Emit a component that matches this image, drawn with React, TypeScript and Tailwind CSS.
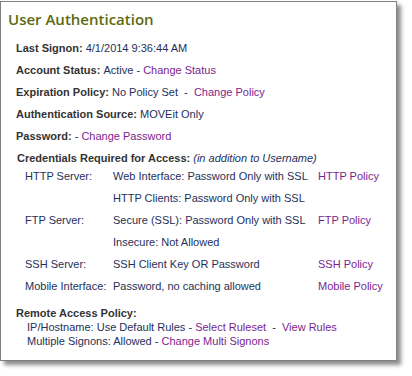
const label = "font-bold text-[#333333]";
const val = "text-[#25305a]";
const link = "text-[#7b1e8e]";

function Row({ children }: { children: React.ReactNode }) {
  return <div className="flex h-[22px] items-center whitespace-pre">{children}</div>;
}

const creds = [
  { name: "HTTP Server:", value: "Web Interface: Password Only with SSL", policy: "HTTP Policy" },
  { name: "", value: "HTTP Clients: Password Only with SSL", policy: "" },
  { name: "FTP Server:", value: "Secure (SSL): Password Only with SSL", policy: "FTP Policy" },
  { name: "", value: "Insecure: Not Allowed", policy: "" },
  { name: "SSH Server:", value: "SSH Client Key OR Password", policy: "SSH Policy" },
  { name: "Mobile Interface:", value: "Password, no caching allowed", policy: "Mobile Policy" },
];

export default function App() {
  return (
    <div className="h-[376px] w-[412px] bg-white pt-[1px]">
      <div className="h-[360px] w-[397px] border border-[#808080] bg-white px-[7px] pt-[5px] shadow-[4px_4px_4px_rgba(0,0,0,0.45)]">
        <h1 className="font-['Open_Sans',sans-serif] text-[15px] font-semibold leading-[24px] text-[#5d6a12]">
          User Authentication
        </h1>
        <div className="mt-[6px] pl-[8px] font-['Liberation_Sans',Arial,sans-serif] text-[11px] leading-[14px]">
          <Row>
            <span className={label}>Last Signon: </span>
            <span className={val}>4/1/2014 9:36:44 AM</span>
          </Row>
          <Row>
            <span className={label}>Account Status: </span>
            <span className={val}>Active - </span>
            <span className={link}>Change Status</span>
          </Row>
          <Row>
            <span className={label}>Expiration Policy: </span>
            <span className={val}>No Policy Set  -  </span>
            <span className={link}>Change Policy</span>
          </Row>
          <Row>
            <span className={label}>Authentication Source: </span>
            <span className={val}>MOVEit Only</span>
          </Row>
          <Row>
            <span className={label}>Password: </span>
            <span className={val}>- </span>
            <span className={link}>Change Password</span>
          </Row>
          <div className="flex h-[18px] items-end whitespace-pre pl-[1px]">
            <span className={label}>Credentials Required for Access: </span>
            <span className={`${val} italic`}>(in addition to Username)</span>
          </div>
          <div className="pl-[9px]">
            {creds.map((c, i) => (
              <div key={i} className={`grid h-[22px] grid-cols-[88px_205px_auto] items-center whitespace-pre ${val}`}>
                <span>{c.name}</span>
                <span>{c.value}</span>
                <span className={link}>{c.policy}</span>
              </div>
            ))}
          </div>
          <div className="mt-[9px] whitespace-pre">
            <div className={label}>Remote Access Policy:</div>
            <div className={`pl-[11px] ${val}`}>
              <div>
                IP/Hostname: Use Default Rules - <span className={link}>Select Ruleset</span>
                {"  -  "}
                <span className={link}>View Rules</span>
              </div>
              <div>
                Multiple Signons: Allowed - <span className={link}>Change Multi Signons</span>
              </div>
            </div>
          </div>
        </div>
      </div>
    </div>
  );
}
